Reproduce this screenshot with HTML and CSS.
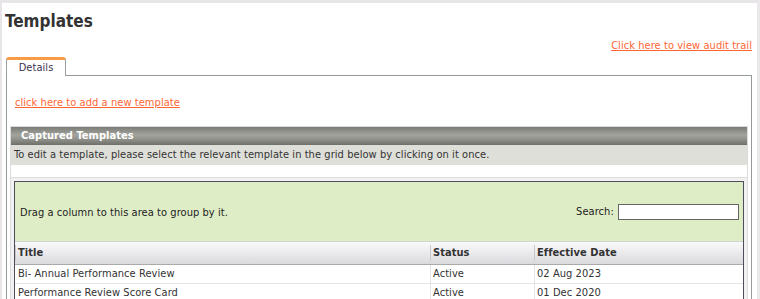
FILE: index.html
```html
<!DOCTYPE html>
<html lang="en">
<head>
    <meta charset="UTF-8">
    <title>Templates</title>
    <link rel="stylesheet" href="styles.css">
</head>
<body>
  <div class="frame">
    <h1 class="page-title">Templates</h1>
    <div class="audit-row"><a href="#">Click here to view audit trail</a></div>

    <div class="tabs">
      <div class="tab">Details</div>
      <div class="tab-fill"></div>
    </div>

    <div class="panel">
      <p class="add-row"><a href="#">click here to add a new template</a></p>

      <div class="section">
        <div class="section-head">Captured Templates</div>
        <div class="section-note">To edit a template, please select the relevant template in the grid below by clicking on it once.</div>
        <div class="section-gap"></div>

        <div class="grid-wrap">
          <div class="grid">
            <div class="group-bar">
              <span>Drag a column to this area to group by it.</span>
              <label class="search">Search: <input type="text"></label>
            </div>
            <table>
              <colgroup>
                <col class="col-title">
                <col class="col-status">
                <col>
              </colgroup>
              <thead>
                <tr>
                  <th>Title</th>
                  <th>Status</th>
                  <th>Effective Date</th>
                </tr>
              </thead>
              <tbody>
                <tr>
                  <td>Bi- Annual Performance Review</td>
                  <td>Active</td>
                  <td>02 Aug 2023</td>
                </tr>
                <tr>
                  <td>Performance Review Score Card</td>
                  <td>Active</td>
                  <td>01 Dec 2020</td>
                </tr>
              </tbody>
            </table>
          </div>
        </div>
      </div>
    </div>
  </div>
</body>
</html>
```

FILE: styles.css
```css
*{
  padding: 0;
  margin: 0;
  box-sizing: border-box;
}

html, body{
  height: 100%;
  overflow: hidden;
}

body{
  font-family: "DejaVu Sans Condensed", "DejaVu Sans", sans-serif;
  font-stretch: condensed;
  font-size: 11px;
  letter-spacing: 0.06px;
  color: #333;
  background: #fff;
}

/*light frame round the page*/
.frame{
  min-height: 100%;
  border-top: 3px solid #e8e5e8;
  border-left: 2px solid #e8e5e8;
  border-right: 3px solid #ebe8eb;
}

.page-title{
  margin: 8px 0 0 3px;
  font-size: 17px;
  line-height: 20px;
  font-weight: bold;
  letter-spacing: 0;
  color: #333;
}

a{
  color: #ff6633;
  text-decoration: underline;
}

.audit-row{
  margin: 8px 5px 0 0;
  text-align: right;
  line-height: 13px;
}

/*tab strip*/
.tabs{
  display: flex;
  margin: 5px 5px 0 4px;
}

.tab{
  width: 60px;
  height: 19px;
  line-height: 16px;
  text-align: center;
  color: #3b3350;
  border: 1px solid #9a9e9e;
  border-top: 3px solid #f79b45;
  border-bottom: none;
  border-radius: 3px 3px 0 0;
}

.tab-fill{
  flex: 1;
  border-bottom: 1px solid #949a9a;
}

.panel{
  margin: 0 5px 0 4px;
  padding-top: 20px;
  border-left: 1px solid #949a9a;
  border-right: 1px solid #949a9a;
  min-height: 240px;
}

.add-row{
  padding-left: 8px;
  line-height: 13px;
}

/*captured templates box*/
.section{
  margin: 17px 3px 0;
  border: 1px solid #dcdcdc;
}

.section-head{
  height: 18px;
  line-height: 18px;
  padding-left: 10px;
  color: #fff;
  font-weight: bold;
  background: linear-gradient(#7c7c77, #a4a49e 45%, #8f8f89 70%, #6f6f6a);
}

.section-note{
  line-height: 20px;
  padding-left: 3px;
  background-color: #dfdfd9;
}

.section-gap{
  height: 12px;
}

.grid-wrap{
  border-top: 1px solid #dddddd;
  background-color: #f1f1f1;
  padding: 3px;
}

.grid{
  border: 1px solid #4d4d5c;
  background: #fff;
}

.group-bar{
  height: 59px;
  display: flex;
  align-items: center;
  justify-content: space-between;
  padding: 1px 4px 0 5px;
  background-color: #dfedc6;
  color: #222;
}

.search input{
  width: 121px;
  height: 16px;
  margin-left: 1px;
  border: 1px solid #666;
  background: #fff;
  vertical-align: middle;
}

/*grid table*/
table{
  width: 100%;
  table-layout: fixed;
  border-collapse: separate;
  border-spacing: 0;
}

.col-title{
  width: 415px;
}

.col-status{
  width: 104px;
}

th{
  text-align: left;
  font-weight: bold;
  line-height: 22px;
  padding: 0 3px;
  border-top: 1px solid #d2d2d2;
  border-bottom: 1px solid #aaaaaa;
  background:
    linear-gradient(#c9c9c9, #c9c9c9) no-repeat 0 50% / 1px 16px,
    linear-gradient(#f9f9f9, #ececef 45%, #dadade);
}

td{
  line-height: 18px;
  padding: 0 3px;
  border-bottom: 1px solid #e4e4e4;
  white-space: nowrap;
}

td + td{
  border-left: 1px solid #e4e4e4;
  padding-left: 2px;
}
```
